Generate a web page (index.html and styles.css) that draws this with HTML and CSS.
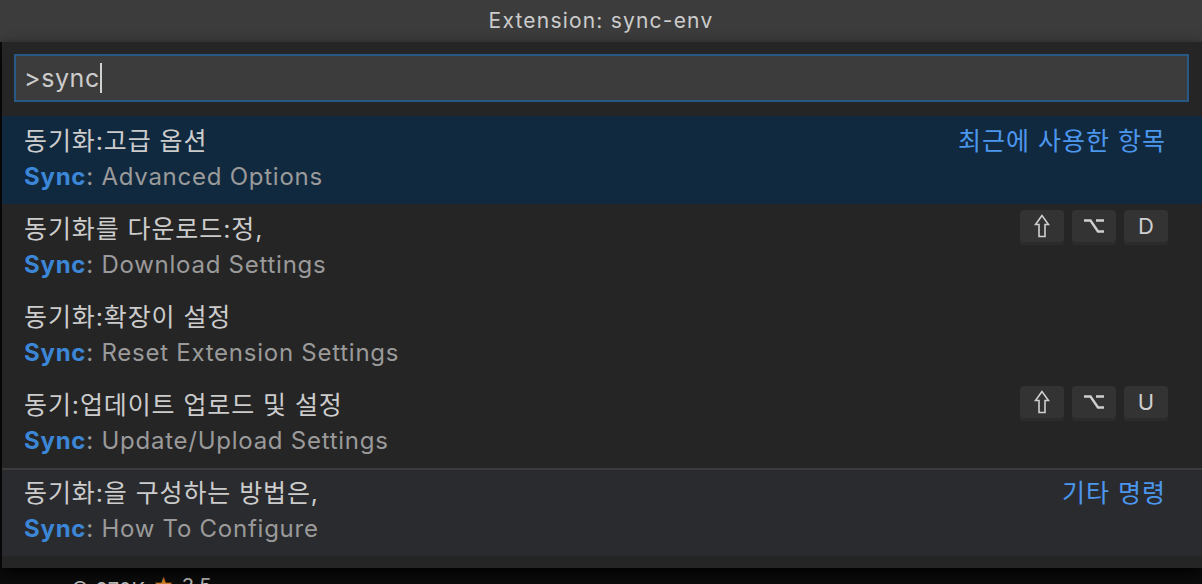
FILE: index.html
```html
<!DOCTYPE html>
<html lang="ko">
<head>
<meta charset="utf-8">
<link rel="stylesheet" href="styles.css">
</head>
<body>
<div class="titlebar">Extension: sync-env</div>
<div class="widget">
  <div class="input-wrap">
    <div class="input"><span class="query">&gt;sync</span><span class="caret"></span></div>
  </div>
  <div class="list">
    <div class="row selected">
      <div class="line1"><span class="label">동기화:고급 옵션</span><span class="tag">최근에 사용한 항목</span></div>
      <div class="line2"><b class="hl">Sync</b>: Advanced Options</div>
    </div>
    <div class="row">
      <div class="line1"><span class="label">동기화를 다운로드:정,</span><span class="keys"><span class="key"><svg class="ico-shift" viewBox="0 0 16 24" width="16" height="24"><path d="M8 1.5 L1.5 10.5 H5 V22.5 H11 V10.5 H14.5 Z"/></svg></span><span class="key"><svg class="ico-opt" viewBox="0 0 22 16" width="22" height="16"><path d="M1 2.5 H7.5 L15 13.5 H21 M13 2.5 H21"/></svg></span><span class="key">D</span></span></div>
      <div class="line2"><b class="hl">Sync</b>: Download Settings</div>
    </div>
    <div class="row">
      <div class="line1"><span class="label">동기화:확장이 설정</span></div>
      <div class="line2"><b class="hl">Sync</b>: Reset Extension Settings</div>
    </div>
    <div class="row">
      <div class="line1"><span class="label">동기:업데이트 업로드 및 설정</span><span class="keys"><span class="key"><svg class="ico-shift" viewBox="0 0 16 24" width="16" height="24"><path d="M8 1.5 L1.5 10.5 H5 V22.5 H11 V10.5 H14.5 Z"/></svg></span><span class="key"><svg class="ico-opt" viewBox="0 0 22 16" width="22" height="16"><path d="M1 2.5 H7.5 L15 13.5 H21 M13 2.5 H21"/></svg></span><span class="key">U</span></span></div>
      <div class="line2"><b class="hl">Sync</b>: Update/Upload Settings</div>
    </div>
    <div class="row hover separated">
      <div class="line1"><span class="label">동기화:을 구성하는 방법은,</span><span class="tag">기타 명령</span></div>
      <div class="line2"><b class="hl">Sync</b>: How To Configure</div>
    </div>
  </div>
</div>
<div class="below"><span class="stat">⊙ 270K</span><span class="star">★</span><span class="stat">3.5</span></div>
</body>
</html>
```
FILE: styles.css
```css
html, body {
  margin: 0;
  padding: 0;
}
body {
  width: 1202px;
  height: 584px;
  overflow: hidden;
  background: #0c0c0c;
  font-family: Inter, "Noto Sans CJK KR", sans-serif;
  color: #cccccc;
}
.titlebar {
  height: 42px;
  background: #3c3c3c;
  display: flex;
  align-items: center;
  justify-content: center;
  font-size: 21px;
  letter-spacing: 1.2px;
  color: #cccccc;
  padding-bottom: 2px;
  box-sizing: border-box;
}
.widget {
  margin-left: 2px;
  background: #252526;
  padding: 12px 0 12px 0;
  box-shadow: 0 6px 14px rgba(0, 0, 0, 0.9);
  position: relative;
  z-index: 1;
}
.input-wrap {
  padding: 0 13px 14px 12px;
}
.input {
  height: 48px;
  box-sizing: border-box;
  border: 2px solid #285886;
  background: #3c3c3c;
  display: flex;
  align-items: center;
  padding-left: 8px;
  font-size: 25px;
  letter-spacing: 0.6px;
  color: #cccccc;
}
.caret {
  display: inline-block;
  width: 2px;
  height: 30px;
  background: #d0d0d0;
  margin-left: 0;
}
.list {
  display: flex;
  flex-direction: column;
}
.row {
  height: 88px;
  box-sizing: border-box;
  padding: 4px 36px 0 22px;
}
.row.selected {
  background: #11293f;
}
.row.hover {
  background: #2a2b2e;
}
.row.separated {
  border-top: 2px solid #3b3b3c;
  padding-top: 2px;
}
.line1 {
  display: flex;
  align-items: center;
  justify-content: space-between;
  height: 38px;
  font-size: 25px;
  letter-spacing: 0.9px;
  color: #cccccc;
}
.line2 {
  height: 38px;
  line-height: 38px;
  font-size: 24px;
  letter-spacing: 0.75px;
  color: #9a9a9a;
}
.hl {
  color: #3b86d6;
  font-weight: 700;
}
.tag {
  color: #4c97ee;
  letter-spacing: 1px;
}
.keys {
  display: flex;
  gap: 8px;
  margin-right: -2px;
  letter-spacing: 0;
}
.key {
  min-width: 44px;
  height: 35px;
  box-sizing: border-box;
  background: #333333;
  border-radius: 4px;
  box-shadow: inset 0 -3px 0 #2b2b2b;
  display: flex;
  align-items: center;
  justify-content: center;
  font-size: 22px;
  color: #cfcfcf;
  padding-bottom: 2px;
}
.key svg {
  fill: none;
  stroke: #cfcfcf;
}
.ico-shift {
  stroke-width: 1.6;
  stroke-linejoin: miter;
}
.ico-opt {
  stroke-width: 2.4;
}
.below {
  padding: 6px 0 0 70px;
  display: flex;
  gap: 8px;
  font-size: 20px;
  color: #cccccc;
}
.star {
  color: #e08a2c;
}
```
